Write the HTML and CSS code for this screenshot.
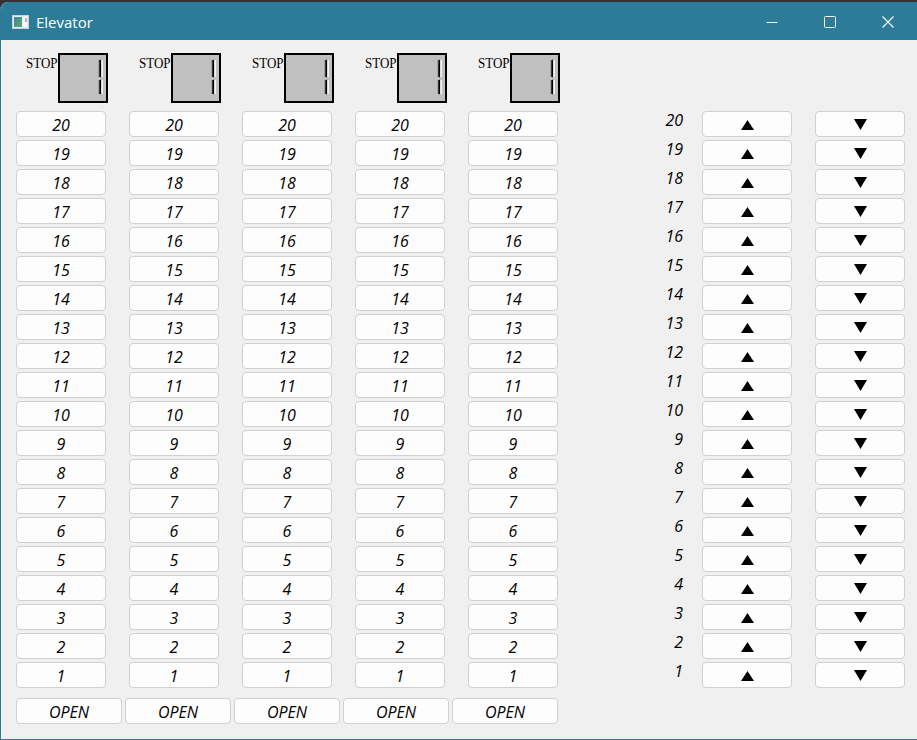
FILE: index.html
```html
<!DOCTYPE html>
<html>
<head>
<meta charset="utf-8">
<title>Elevator</title>
<link rel="stylesheet" href="styles.css">
</head>
<body>
<div class="window">
  <div class="titlebar">
    <svg class="app-icon" width="17" height="14" viewBox="0 0 17 14">
      <defs><linearGradient id="g" x1="0" y1="0" x2="1" y2="1"><stop offset="0" stop-color="#3a7fa6"/><stop offset="1" stop-color="#5fae6a"/></linearGradient></defs>
      <rect x="0.5" y="0.5" width="16" height="13" fill="#e8eef2" stroke="#c9d3da"/>
      <rect x="2" y="2" width="8" height="10" fill="url(#g)"/>
      <rect x="11" y="2" width="4" height="10" fill="#ffffff"/>
      <rect x="13.5" y="3" width="1" height="4" fill="#5a6b75"/>
    </svg>
    <span class="title">Elevator</span>
    <div class="caption">
      <div class="cap-btn"><svg width="12" height="12" viewBox="0 0 12 12"><line x1="0.5" y1="6.5" x2="11.5" y2="6.5" stroke="#fff" stroke-width="1"/></svg></div>
      <div class="cap-btn"><svg width="12" height="12" viewBox="0 0 12 12"><rect x="0.5" y="0.5" width="11" height="11" rx="1" fill="none" stroke="#fff" stroke-width="1"/></svg></div>
      <div class="cap-btn"><svg width="12" height="12" viewBox="0 0 12 12"><path d="M0.5 0.5 L11.5 11.5 M11.5 0.5 L0.5 11.5" stroke="#fff" stroke-width="1.1"/></svg></div>
    </div>
  </div>
  <div class="content">
    <div class="left">
      <div class="shafts">
        <div class="shaft">
          <div class="head"><span class="stop">STOP</span><div class="lcd"><svg width="46" height="46" viewBox="0 0 46 46"><rect x="38.5" y="5" width="0.8" height="17" fill="#888"/><polygon points="39.3,5.5 40.3,4.5 41.3,5.5 41.3,21.5 40.3,22.5 39.3,21.5" fill="#000"/><rect x="41.3" y="5" width="1.5" height="17" fill="#fff"/><rect x="38.5" y="25" width="0.8" height="14" fill="#888"/><polygon points="39.3,25.5 40.3,24.5 41.3,25.5 41.3,38.5 40.3,39.5 39.3,38.5" fill="#000"/><rect x="41.3" y="25" width="1.5" height="14" fill="#fff"/></svg></div></div>
          <div class="btn">20</div><div class="btn">19</div><div class="btn">18</div><div class="btn">17</div><div class="btn">16</div><div class="btn">15</div><div class="btn">14</div><div class="btn">13</div><div class="btn">12</div><div class="btn">11</div><div class="btn">10</div><div class="btn">9</div><div class="btn">8</div><div class="btn">7</div><div class="btn">6</div><div class="btn">5</div><div class="btn">4</div><div class="btn">3</div><div class="btn">2</div><div class="btn">1</div>
        </div>
        <div class="shaft">
          <div class="head"><span class="stop">STOP</span><div class="lcd"><svg width="46" height="46" viewBox="0 0 46 46"><rect x="38.5" y="5" width="0.8" height="17" fill="#888"/><polygon points="39.3,5.5 40.3,4.5 41.3,5.5 41.3,21.5 40.3,22.5 39.3,21.5" fill="#000"/><rect x="41.3" y="5" width="1.5" height="17" fill="#fff"/><rect x="38.5" y="25" width="0.8" height="14" fill="#888"/><polygon points="39.3,25.5 40.3,24.5 41.3,25.5 41.3,38.5 40.3,39.5 39.3,38.5" fill="#000"/><rect x="41.3" y="25" width="1.5" height="14" fill="#fff"/></svg></div></div>
          <div class="btn">20</div><div class="btn">19</div><div class="btn">18</div><div class="btn">17</div><div class="btn">16</div><div class="btn">15</div><div class="btn">14</div><div class="btn">13</div><div class="btn">12</div><div class="btn">11</div><div class="btn">10</div><div class="btn">9</div><div class="btn">8</div><div class="btn">7</div><div class="btn">6</div><div class="btn">5</div><div class="btn">4</div><div class="btn">3</div><div class="btn">2</div><div class="btn">1</div>
        </div>
        <div class="shaft">
          <div class="head"><span class="stop">STOP</span><div class="lcd"><svg width="46" height="46" viewBox="0 0 46 46"><rect x="38.5" y="5" width="0.8" height="17" fill="#888"/><polygon points="39.3,5.5 40.3,4.5 41.3,5.5 41.3,21.5 40.3,22.5 39.3,21.5" fill="#000"/><rect x="41.3" y="5" width="1.5" height="17" fill="#fff"/><rect x="38.5" y="25" width="0.8" height="14" fill="#888"/><polygon points="39.3,25.5 40.3,24.5 41.3,25.5 41.3,38.5 40.3,39.5 39.3,38.5" fill="#000"/><rect x="41.3" y="25" width="1.5" height="14" fill="#fff"/></svg></div></div>
          <div class="btn">20</div><div class="btn">19</div><div class="btn">18</div><div class="btn">17</div><div class="btn">16</div><div class="btn">15</div><div class="btn">14</div><div class="btn">13</div><div class="btn">12</div><div class="btn">11</div><div class="btn">10</div><div class="btn">9</div><div class="btn">8</div><div class="btn">7</div><div class="btn">6</div><div class="btn">5</div><div class="btn">4</div><div class="btn">3</div><div class="btn">2</div><div class="btn">1</div>
        </div>
        <div class="shaft">
          <div class="head"><span class="stop">STOP</span><div class="lcd"><svg width="46" height="46" viewBox="0 0 46 46"><rect x="38.5" y="5" width="0.8" height="17" fill="#888"/><polygon points="39.3,5.5 40.3,4.5 41.3,5.5 41.3,21.5 40.3,22.5 39.3,21.5" fill="#000"/><rect x="41.3" y="5" width="1.5" height="17" fill="#fff"/><rect x="38.5" y="25" width="0.8" height="14" fill="#888"/><polygon points="39.3,25.5 40.3,24.5 41.3,25.5 41.3,38.5 40.3,39.5 39.3,38.5" fill="#000"/><rect x="41.3" y="25" width="1.5" height="14" fill="#fff"/></svg></div></div>
          <div class="btn">20</div><div class="btn">19</div><div class="btn">18</div><div class="btn">17</div><div class="btn">16</div><div class="btn">15</div><div class="btn">14</div><div class="btn">13</div><div class="btn">12</div><div class="btn">11</div><div class="btn">10</div><div class="btn">9</div><div class="btn">8</div><div class="btn">7</div><div class="btn">6</div><div class="btn">5</div><div class="btn">4</div><div class="btn">3</div><div class="btn">2</div><div class="btn">1</div>
        </div>
        <div class="shaft">
          <div class="head"><span class="stop">STOP</span><div class="lcd"><svg width="46" height="46" viewBox="0 0 46 46"><rect x="38.5" y="5" width="0.8" height="17" fill="#888"/><polygon points="39.3,5.5 40.3,4.5 41.3,5.5 41.3,21.5 40.3,22.5 39.3,21.5" fill="#000"/><rect x="41.3" y="5" width="1.5" height="17" fill="#fff"/><rect x="38.5" y="25" width="0.8" height="14" fill="#888"/><polygon points="39.3,25.5 40.3,24.5 41.3,25.5 41.3,38.5 40.3,39.5 39.3,38.5" fill="#000"/><rect x="41.3" y="25" width="1.5" height="14" fill="#fff"/></svg></div></div>
          <div class="btn">20</div><div class="btn">19</div><div class="btn">18</div><div class="btn">17</div><div class="btn">16</div><div class="btn">15</div><div class="btn">14</div><div class="btn">13</div><div class="btn">12</div><div class="btn">11</div><div class="btn">10</div><div class="btn">9</div><div class="btn">8</div><div class="btn">7</div><div class="btn">6</div><div class="btn">5</div><div class="btn">4</div><div class="btn">3</div><div class="btn">2</div><div class="btn">1</div>
        </div>
      </div>
      <div class="open-row">
        <div class="btn open">OPEN</div><div class="btn open">OPEN</div><div class="btn open">OPEN</div><div class="btn open">OPEN</div><div class="btn open">OPEN</div>
      </div>
    </div>
    <div class="right">
      <div class="row"><span class="label">20</span><div class="btn arrow"><svg class="up" width="13" height="10" viewBox="0 0 13 10"><polygon points="6.5,0 13,10 0,10"/></svg></div><div class="btn arrow"><svg class="down" width="13" height="11" viewBox="0 0 13 11"><polygon points="0,0 13,0 6.5,11"/></svg></div></div>
      <div class="row"><span class="label">19</span><div class="btn arrow"><svg class="up" width="13" height="10" viewBox="0 0 13 10"><polygon points="6.5,0 13,10 0,10"/></svg></div><div class="btn arrow"><svg class="down" width="13" height="11" viewBox="0 0 13 11"><polygon points="0,0 13,0 6.5,11"/></svg></div></div>
      <div class="row"><span class="label">18</span><div class="btn arrow"><svg class="up" width="13" height="10" viewBox="0 0 13 10"><polygon points="6.5,0 13,10 0,10"/></svg></div><div class="btn arrow"><svg class="down" width="13" height="11" viewBox="0 0 13 11"><polygon points="0,0 13,0 6.5,11"/></svg></div></div>
      <div class="row"><span class="label">17</span><div class="btn arrow"><svg class="up" width="13" height="10" viewBox="0 0 13 10"><polygon points="6.5,0 13,10 0,10"/></svg></div><div class="btn arrow"><svg class="down" width="13" height="11" viewBox="0 0 13 11"><polygon points="0,0 13,0 6.5,11"/></svg></div></div>
      <div class="row"><span class="label">16</span><div class="btn arrow"><svg class="up" width="13" height="10" viewBox="0 0 13 10"><polygon points="6.5,0 13,10 0,10"/></svg></div><div class="btn arrow"><svg class="down" width="13" height="11" viewBox="0 0 13 11"><polygon points="0,0 13,0 6.5,11"/></svg></div></div>
      <div class="row"><span class="label">15</span><div class="btn arrow"><svg class="up" width="13" height="10" viewBox="0 0 13 10"><polygon points="6.5,0 13,10 0,10"/></svg></div><div class="btn arrow"><svg class="down" width="13" height="11" viewBox="0 0 13 11"><polygon points="0,0 13,0 6.5,11"/></svg></div></div>
      <div class="row"><span class="label">14</span><div class="btn arrow"><svg class="up" width="13" height="10" viewBox="0 0 13 10"><polygon points="6.5,0 13,10 0,10"/></svg></div><div class="btn arrow"><svg class="down" width="13" height="11" viewBox="0 0 13 11"><polygon points="0,0 13,0 6.5,11"/></svg></div></div>
      <div class="row"><span class="label">13</span><div class="btn arrow"><svg class="up" width="13" height="10" viewBox="0 0 13 10"><polygon points="6.5,0 13,10 0,10"/></svg></div><div class="btn arrow"><svg class="down" width="13" height="11" viewBox="0 0 13 11"><polygon points="0,0 13,0 6.5,11"/></svg></div></div>
      <div class="row"><span class="label">12</span><div class="btn arrow"><svg class="up" width="13" height="10" viewBox="0 0 13 10"><polygon points="6.5,0 13,10 0,10"/></svg></div><div class="btn arrow"><svg class="down" width="13" height="11" viewBox="0 0 13 11"><polygon points="0,0 13,0 6.5,11"/></svg></div></div>
      <div class="row"><span class="label">11</span><div class="btn arrow"><svg class="up" width="13" height="10" viewBox="0 0 13 10"><polygon points="6.5,0 13,10 0,10"/></svg></div><div class="btn arrow"><svg class="down" width="13" height="11" viewBox="0 0 13 11"><polygon points="0,0 13,0 6.5,11"/></svg></div></div>
      <div class="row"><span class="label">10</span><div class="btn arrow"><svg class="up" width="13" height="10" viewBox="0 0 13 10"><polygon points="6.5,0 13,10 0,10"/></svg></div><div class="btn arrow"><svg class="down" width="13" height="11" viewBox="0 0 13 11"><polygon points="0,0 13,0 6.5,11"/></svg></div></div>
      <div class="row"><span class="label">9</span><div class="btn arrow"><svg class="up" width="13" height="10" viewBox="0 0 13 10"><polygon points="6.5,0 13,10 0,10"/></svg></div><div class="btn arrow"><svg class="down" width="13" height="11" viewBox="0 0 13 11"><polygon points="0,0 13,0 6.5,11"/></svg></div></div>
      <div class="row"><span class="label">8</span><div class="btn arrow"><svg class="up" width="13" height="10" viewBox="0 0 13 10"><polygon points="6.5,0 13,10 0,10"/></svg></div><div class="btn arrow"><svg class="down" width="13" height="11" viewBox="0 0 13 11"><polygon points="0,0 13,0 6.5,11"/></svg></div></div>
      <div class="row"><span class="label">7</span><div class="btn arrow"><svg class="up" width="13" height="10" viewBox="0 0 13 10"><polygon points="6.5,0 13,10 0,10"/></svg></div><div class="btn arrow"><svg class="down" width="13" height="11" viewBox="0 0 13 11"><polygon points="0,0 13,0 6.5,11"/></svg></div></div>
      <div class="row"><span class="label">6</span><div class="btn arrow"><svg class="up" width="13" height="10" viewBox="0 0 13 10"><polygon points="6.5,0 13,10 0,10"/></svg></div><div class="btn arrow"><svg class="down" width="13" height="11" viewBox="0 0 13 11"><polygon points="0,0 13,0 6.5,11"/></svg></div></div>
      <div class="row"><span class="label">5</span><div class="btn arrow"><svg class="up" width="13" height="10" viewBox="0 0 13 10"><polygon points="6.5,0 13,10 0,10"/></svg></div><div class="btn arrow"><svg class="down" width="13" height="11" viewBox="0 0 13 11"><polygon points="0,0 13,0 6.5,11"/></svg></div></div>
      <div class="row"><span class="label">4</span><div class="btn arrow"><svg class="up" width="13" height="10" viewBox="0 0 13 10"><polygon points="6.5,0 13,10 0,10"/></svg></div><div class="btn arrow"><svg class="down" width="13" height="11" viewBox="0 0 13 11"><polygon points="0,0 13,0 6.5,11"/></svg></div></div>
      <div class="row"><span class="label">3</span><div class="btn arrow"><svg class="up" width="13" height="10" viewBox="0 0 13 10"><polygon points="6.5,0 13,10 0,10"/></svg></div><div class="btn arrow"><svg class="down" width="13" height="11" viewBox="0 0 13 11"><polygon points="0,0 13,0 6.5,11"/></svg></div></div>
      <div class="row"><span class="label">2</span><div class="btn arrow"><svg class="up" width="13" height="10" viewBox="0 0 13 10"><polygon points="6.5,0 13,10 0,10"/></svg></div><div class="btn arrow"><svg class="down" width="13" height="11" viewBox="0 0 13 11"><polygon points="0,0 13,0 6.5,11"/></svg></div></div>
      <div class="row"><span class="label">1</span><div class="btn arrow"><svg class="up" width="13" height="10" viewBox="0 0 13 10"><polygon points="6.5,0 13,10 0,10"/></svg></div><div class="btn arrow"><svg class="down" width="13" height="11" viewBox="0 0 13 11"><polygon points="0,0 13,0 6.5,11"/></svg></div></div>
    </div>
  </div>
</div>
</body>
</html>
```
FILE: styles.css
```css
html, body {
  margin: 0;
  padding: 0;
}
body {
  background: #333333;
  width: 917px;
  height: 740px;
  overflow: hidden;
}
.window {
  margin-top: 2px;
  width: 917px;
  height: 738px;
  box-sizing: border-box;
  background: #f0f0f0;
  border-left: 1px solid #2c7a97;
  border-bottom: 1px solid #2c7a97;
  border-top-left-radius: 8px;
  overflow: hidden;
  display: flex;
  flex-direction: column;
}
.titlebar {
  height: 38px;
  flex: none;
  background: #2c7b98;
  display: flex;
  align-items: center;
  color: #ffffff;
  margin-left: -1px;
}
.app-icon {
  margin-left: 12px;
  margin-top: 1px;
}
.title {
  margin-left: 7px;
  font-family: "Open Sans", "Noto Sans", sans-serif;
  font-size: 15px;
  margin-top: 1px;
}
.caption {
  margin-left: auto;
  display: flex;
  height: 100%;
}
.cap-btn {
  width: 58px;
  height: 100%;
  display: flex;
  align-items: center;
  justify-content: center;
  padding-top: 2px;
  box-sizing: border-box;
}
.content {
  display: flex;
  padding: 13px 0 0 15px;
}
.left {
  display: flex;
  flex-direction: column;
}
.shafts {
  display: flex;
  gap: 23px;
}
.shaft {
  width: 90px;
  display: flex;
  flex-direction: column;
  gap: 3px;
}
.head {
  display: flex;
  height: 50px;
  width: 92px;
  margin-bottom: 5px;
}
.stop {
  font-family: "Liberation Serif", serif;
  font-size: 13px;
  width: 32px;
  margin-left: 10px;
  line-height: 14px;
  padding-top: 2px;
  color: #000;
  transform: scaleY(1.15);
  transform-origin: top left;
}
.lcd {
  width: 50px;
  height: 50px;
  box-sizing: border-box;
  border: 2px solid #000;
  background: #c0c0c0;
}
.lcd svg {
  display: block;
}
.btn {
  box-sizing: border-box;
  height: 26px;
  background: #fdfdfd;
  border: 1px solid #d0d0d0;
  border-radius: 4px;
  display: flex;
  align-items: center;
  justify-content: center;
  font-family: "Open Sans", "DejaVu Sans", sans-serif;
  font-style: italic;
  font-size: 16px;
  color: #000;
  padding-top: 1px;
}
.open-row {
  display: flex;
  gap: 3px;
  margin-top: 10px;
}
.open {
  width: 106px;
}
.right {
  margin-left: 65px;
  padding-top: 58px;
  display: flex;
  flex-direction: column;
  gap: 3px;
}
.row {
  display: flex;
  height: 26px;
}
.label {
  width: 60px;
  text-align: right;
  font-family: "Open Sans", "DejaVu Sans", sans-serif;
  font-style: italic;
  font-size: 16px;
  line-height: 18px;
  color: #000;
}
.arrow {
  width: 90px;
  margin-left: 19px;
  font-size: 0;
}
.arrow + .arrow {
  margin-left: 23px;
}
.arrow svg {
  fill: #000;
}
```
